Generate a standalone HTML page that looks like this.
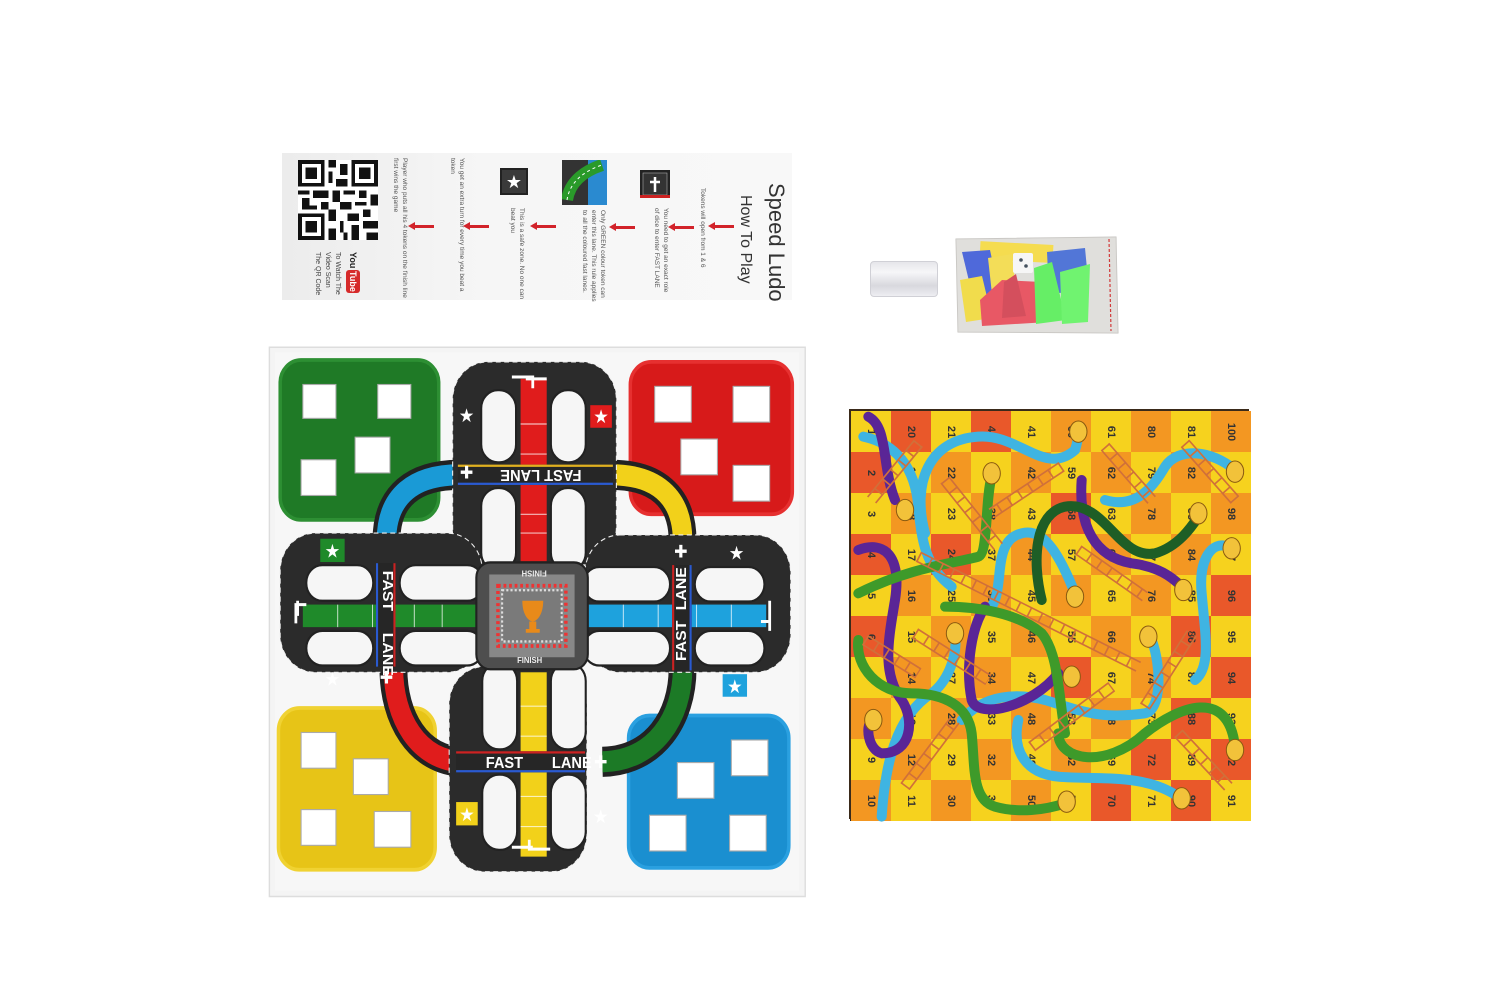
<!DOCTYPE html>
<html><head><meta charset="utf-8">
<style>
*{margin:0;padding:0;box-sizing:border-box}
body{width:1500px;height:1000px;background:#fff;position:relative;overflow:hidden;font-family:"Liberation Sans",sans-serif}
.abs{position:absolute}
.v{position:absolute;writing-mode:vertical-rl;color:#333;white-space:nowrap}
.sm{font-size:6.5px;line-height:9px;color:#555}
.arr{position:absolute;width:20px;height:3px;background:#d2232a}
.arr:before{content:"";position:absolute;left:-6px;top:-3px;border-right:7px solid #d2232a;border-top:4.5px solid transparent;border-bottom:4.5px solid transparent}
#grid{position:absolute;left:849px;top:409px;width:400px;height:410px;display:grid;grid-template-columns:repeat(10,40px);grid-template-rows:repeat(10,41px);border:2px solid #3a2a1a;box-shadow:1px 2px 0 #2a2a2a}
#grid div{display:flex;align-items:center;justify-content:center;font-size:11px;color:#333;font-weight:bold}
#grid div span{display:inline-block;transform:rotate(90deg)}
.y{background:#f6d21e}.o{background:#f39722}.r{background:#e9582a}
</style></head><body>

<!-- instruction card -->
<div class="abs" style="left:282px;top:153px;width:510px;height:147px;background:linear-gradient(90deg,#ececec,#f6f6f6 40%,#f8f8f8)"></div>
<div class="v" style="left:763px;top:183px;font-size:22px">Speed Ludo</div>
<div class="v" style="left:736px;top:195px;font-size:16px">How To Play</div>
<div class="v sm" style="left:698px;top:188px">Tokens will open from 1 &amp; 6</div>
<div class="v sm" style="left:652px;top:208px">You need to get an exact role<br>of dice to enter FAST LANE</div>
<div class="v sm" style="left:580px;top:210px">Only GREEN colour token can<br>enter this lane. This rule applies<br>to all the coloured fast lanes.</div>
<div class="v sm" style="left:508px;top:208px">This is a safe zone. No one can<br>beat you</div>
<div class="v sm" style="left:448px;top:158px">You get an extra turn for every time you beat a<br>token</div>
<div class="v sm" style="left:391px;top:158px">Player who puts all his 4 tokens on the finish line<br>first wins the game</div>
<div class="v" style="left:312px;top:252px;font-size:7px;line-height:10px;color:#444">To Watch The<br>Video Scan<br>The QR Code</div>
<div class="abs" style="left:346px;top:252px;width:18px;height:42px">
  <div class="v" style="left:2px;top:0;font-size:9px;font-weight:bold;color:#222">You</div>
  <div class="v" style="left:0;top:18px;font-size:9px;font-weight:bold;color:#fff;background:#d62a2a;border-radius:3px;padding:1px 2px">Tube</div>
</div>
<div class="arr" style="left:714px;top:225px"></div>
<div class="arr" style="left:674px;top:226px"></div>
<div class="arr" style="left:615px;top:226px"></div>
<div class="arr" style="left:536px;top:225px"></div>
<div class="arr" style="left:469px;top:225px"></div>
<div class="arr" style="left:414px;top:225px"></div>
<svg class="abs" style="left:640px;top:170px" width="30" height="28"><rect width="30" height="28" fill="#222"/><rect x="3" y="3" width="24" height="22" fill="#333" stroke="#aaa" stroke-width=".6"/><path d="M15 7v15M10 12h10" stroke="#fff" stroke-width="2.5"/><rect y="25" width="30" height="3" fill="#c22"/></svg>
<svg class="abs" style="left:562px;top:160px" width="45" height="45"><rect width="45" height="45" fill="#2a8ad0"/><rect width="26" height="45" fill="#333"/><path d="M5 40 C8 20 25 10 40 5" stroke="#2a9a2a" stroke-width="12" fill="none"/><path d="M5 40 C8 20 25 10 40 5" stroke="#fff" stroke-width="1" stroke-dasharray="3 3" fill="none"/></svg>
<svg class="abs" style="left:500px;top:168px" width="28" height="27"><rect width="28" height="27" fill="#222"/><rect x="2" y="2" width="24" height="23" fill="#3a3a3a"/><text x="14" y="20" font-size="18" text-anchor="middle" fill="#fff" font-family="DejaVu Sans">★</text></svg>
<svg class="abs" style="left:297px;top:160px" width="82" height="80" viewBox="0 0 21 21" shape-rendering="crispEdges">
<rect width="21" height="21" fill="#fff"/>
<g fill="#111"><path d="M0 0h7v7H0zM14 0h7v7h-7zM0 14h7v7H0z"/></g>
<g fill="#fff"><path d="M1 1h5v5H1zM15 1h5v5h-5zM1 15h5v5H1z"/></g>
<g fill="#111"><path d="M2 2h3v3H2zM16 2h3v3h-3zM2 16h3v3H2z"/>
<path d="M8 0h2v2H8zM11 1h2v3h-2zM8 3h1v3H8zM10 5h3v2h-3zM0 8h3v1H0zM4 8h4v2H4zM9 8h2v3H9zM12 8h3v1h-3zM16 8h2v2h-2zM19 9h2v3h-2zM1 10h2v3H1zM6 11h2v2H6zM11 11h3v2h-3zM15 11h3v1h-3zM3 12h2v1H3zM8 13h2v3H8zM13 14h3v2h-3zM17 13h2v2h-2zM11 16h1v3h-1zM14 17h2v4h-2zM17 16h4v2h-4zM8 18h2v3H8zM18 19h3v2h-3zM12 19h1v2h-1z"/></g>
</svg>

<!-- dice cup -->
<div class="abs" style="left:870px;top:261px;width:68px;height:36px;border-radius:4px;background:linear-gradient(180deg,#e6e6ea,#f6f6f8 30%,#d8d8de 70%,#eeeef2);border:1px solid #d0d0d6"></div>

<!-- bag -->
<svg class="abs" style="left:950px;top:233px" width="175" height="105" viewBox="950 233 175 105">
<path d="M956 239 L1116 237 L1118 333 L958 332 Z" fill="#d8d6d2" stroke="#c4c2be"/>
<path d="M980 243 h73 v18 h-73z" fill="#f2d21e" transform="rotate(3 1015 252)"/>
<path d="M962 252 l28 -2 l12 56 l-26 4z" fill="#1e3fd0"/>
<path d="M960 280 l22 -4 l10 42 l-26 4z" fill="#eed21a"/>
<path d="M988 258 l24 -4 l4 36 l-24 4z" fill="#f0d42a"/>
<rect x="1013" y="253" width="20" height="20" fill="#f4f4f4" rx="2"/>
<circle cx="1021" cy="260" r="1.8" fill="#123"/><circle cx="1026" cy="266" r="1.8" fill="#123"/>
<path d="M980 300 l22 -20 l40 2 l6 40 l-66 4z" fill="#e22a3a"/>
<path d="M1004 282 l12 -8 l10 42 l-24 2z" fill="#c81e30"/>
<path d="M1047 252 l38 -4 l4 42 l-40 4z" fill="#2250cc"/>
<path d="M1034 268 l18 -6 l14 58 l-30 4z" fill="#3cea3c"/>
<path d="M1060 272 l30 -8 l-2 58 l-26 2z" fill="#48f048"/>
<path d="M956 239 L1116 237 L1118 333 L958 332 Z" fill="#fff" opacity=".22"/>
<line x1="1109" y1="239" x2="1111" y2="331" stroke="#d23a3a" stroke-width="1.2" stroke-dasharray="3 2"/>
</svg>

<!-- ludo board -->
<svg class="abs" style="left:268px;top:345px" width="540" height="553" viewBox="0 0 1550 1470" preserveAspectRatio="none">
<rect x="4" y="6" width="1538" height="1460" fill="#f4f4f4" stroke="#ddd" stroke-width="4"/>
<rect x="20" y="20" width="1505" height="1430" fill="#f7f7f7"/>
<g stroke-width="10">
<rect x="35" y="40" width="455" height="425" rx="60" fill="#1f7a26" stroke="#2d8f33"/>
<rect x="1040" y="45" width="465" height="405" rx="60" fill="#d71a1a" stroke="#e63030"/>
<rect x="30" y="965" width="450" height="430" rx="60" fill="#e7c417" stroke="#f0d232"/>
<rect x="1035" y="985" width="460" height="405" rx="60" fill="#1a8fd0" stroke="#2aa0e0"/>
</g>
<g fill="#fff" stroke="#aaa" stroke-width="3">
<rect x="100" y="105" width="95" height="90"/><rect x="315" y="105" width="95" height="90"/><rect x="250" y="245" width="100" height="95"/><rect x="95" y="305" width="100" height="95"/>
<rect x="1110" y="110" width="105" height="95"/><rect x="1335" y="110" width="105" height="95"/><rect x="1185" y="250" width="105" height="95"/><rect x="1335" y="320" width="105" height="95"/>
<rect x="95" y="1030" width="100" height="95"/><rect x="245" y="1100" width="100" height="95"/><rect x="95" y="1235" width="100" height="95"/><rect x="305" y="1240" width="105" height="95"/>
<rect x="1330" y="1050" width="105" height="95"/><rect x="1175" y="1110" width="105" height="95"/><rect x="1095" y="1250" width="105" height="95"/><rect x="1325" y="1250" width="105" height="95"/>
</g>
<g fill="none" stroke-linecap="butt">
<path d="M340 520 C340 400 420 345 550 345" stroke="#222" stroke-width="80"/>
<path d="M340 520 C340 400 420 345 550 345" stroke="#1a9ad6" stroke-width="56"/>
<path d="M985 345 C1110 345 1190 400 1190 520" stroke="#222" stroke-width="80"/>
<path d="M985 345 C1110 345 1190 400 1190 520" stroke="#f2d11a" stroke-width="56"/>
<path d="M360 860 C360 990 430 1105 560 1108" stroke="#222" stroke-width="80"/>
<path d="M360 860 C360 990 430 1105 560 1108" stroke="#e01c1c" stroke-width="56"/>
<path d="M1190 860 C1190 990 1110 1105 960 1108" stroke="#222" stroke-width="80"/>
<path d="M1190 860 C1190 990 1110 1105 960 1108" stroke="#1c7a26" stroke-width="56"/>
</g>
<g fill="#2b2b2b" stroke="#f0f0f0" stroke-width="3" stroke-dasharray="14 10">
<rect x="530" y="45" width="470" height="540" rx="100"/>
<rect x="520" y="855" width="395" height="545" rx="100"/>
<rect x="35" y="500" width="580" height="370" rx="100"/>
<rect x="910" y="505" width="590" height="365" rx="100"/>
</g>
<g fill="#f6f6f6" stroke="#222" stroke-width="6">
<rect x="612" y="120" width="100" height="192" rx="48"/><rect x="612" y="380" width="100" height="220" rx="48"/>
<rect x="812" y="120" width="100" height="192" rx="48"/><rect x="812" y="380" width="100" height="220" rx="48"/>
<rect x="110" y="585" width="192" height="95" rx="46"/><rect x="378" y="585" width="240" height="95" rx="46"/>
<rect x="110" y="760" width="192" height="92" rx="46"/><rect x="378" y="760" width="240" height="92" rx="46"/>
<rect x="905" y="590" width="249" height="92" rx="46"/><rect x="1225" y="590" width="200" height="92" rx="46"/>
<rect x="905" y="760" width="249" height="92" rx="46"/><rect x="1225" y="760" width="200" height="92" rx="46"/>
<rect x="615" y="845" width="100" height="230" rx="48"/><rect x="615" y="1142" width="100" height="200" rx="48"/>
<rect x="812" y="845" width="100" height="230" rx="48"/><rect x="812" y="1142" width="100" height="200" rx="48"/>
</g>
<rect x="725" y="90" width="75" height="485" fill="#e01c1c"/>
<rect x="100" y="690" width="500" height="60" fill="#1f8a2a"/>
<rect x="915" y="690" width="515" height="60" fill="#1ea2dd"/>
<rect x="725" y="870" width="75" height="490" fill="#f2d11a"/>
<g stroke="#fff" stroke-width="3" opacity=".7">
<path d="M725 210h75M725 290h75M725 450h75M725 500h75M200 690v60M300 690v60M420 690v60M500 690v60M1020 690v60M1120 690v60M1230 690v60M1330 690v60M725 960h75M725 1040h75M725 1200h75M725 1280h75"/>
</g>
<g>
<rect x="545" y="318" width="445" height="54" fill="#262626"/>
<rect x="545" y="318" width="445" height="6" fill="#e0b020"/><rect x="545" y="366" width="445" height="6" fill="#2a5ad0"/>
<rect x="540" y="1080" width="370" height="56" fill="#262626"/>
<rect x="540" y="1080" width="370" height="6" fill="#c22"/><rect x="540" y="1130" width="370" height="6" fill="#2a5ad0"/>
<rect x="310" y="580" width="56" height="275" fill="#262626"/>
<rect x="310" y="580" width="6" height="275" fill="#2a5ad0"/><rect x="360" y="580" width="6" height="275" fill="#c22"/>
<rect x="1160" y="585" width="56" height="280" fill="#262626"/>
<rect x="1160" y="585" width="6" height="280" fill="#c22"/><rect x="1210" y="585" width="6" height="280" fill="#2a5ad0"/>
</g>
<g fill="#fff" font-family="Liberation Sans" font-size="42" font-weight="bold">
<text x="0" y="0" transform="translate(900 332) rotate(180)">FAST  LANE</text>
<text x="625" y="1125">FAST</text><text x="815" y="1125">LANE</text>
<text x="0" y="0" transform="translate(330 600) rotate(90)">FAST</text>
<text x="0" y="0" transform="translate(330 765) rotate(90)">LANE</text>
<text x="0" y="0" transform="translate(1200 840) rotate(-90)">FAST</text>
<text x="0" y="0" transform="translate(1200 705) rotate(-90)">LANE</text>
</g>
<rect x="598" y="578" width="320" height="284" rx="40" fill="#4e4e4e" stroke="#222" stroke-width="6"/>
<rect x="635" y="610" width="245" height="220" fill="#888"/>
<rect x="660" y="640" width="195" height="160" fill="none" stroke="#e33" stroke-width="10" stroke-dasharray="8 8"/>
<rect x="672" y="652" width="171" height="136" fill="#7a7a7a" stroke="#ddd" stroke-width="6" stroke-dasharray="6 6"/>
<path d="M730 680 h60 c0 40 -20 55 -30 55 c-10 0 -30 -15 -30 -55z M750 735 h20 v20 h10 v10 h-40 v-10 h10z" fill="#e88a1a"/>
<g fill="#eee" font-size="22" font-weight="bold" font-family="Liberation Sans"><text x="715" y="845">FINISH</text><text x="0" y="0" transform="translate(800 600) rotate(180)">FINISH</text></g>
<rect x="150" y="515" width="70" height="62" fill="#1f8a2a"/>
<rect x="925" y="160" width="62" height="60" fill="#e01c1c"/>
<rect x="1305" y="875" width="70" height="60" fill="#1ea2dd"/>
<rect x="540" y="1215" width="62" height="62" fill="#f2d11a"/>
<g fill="#fff" font-size="50" font-family="DejaVu Sans" text-anchor="middle">
<text x="185" y="565">★</text><text x="956" y="208">★</text><text x="1340" y="925">★</text><text x="571" y="1265">★</text>
<text x="570" y="205">★</text><text x="1345" y="570">★</text><text x="185" y="905">★</text><text x="955" y="1270">★</text>
<text x="570" y="355" font-size="46">✚</text><text x="1185" y="565" font-size="46">✚</text><text x="340" y="900" font-size="46">✚</text><text x="955" y="1125" font-size="46">✚</text>
</g>
<g fill="none" stroke="#fff" stroke-width="8">
<path d="M700 85h60v30 M740 90h60"/><path d="M810 1340h-60v-25 M760 1335h-60"/>
<path d="M80 740v-50h30 M85 720v-40"/><path d="M1440 680v55h-25 M1440 720v40"/>
</g>
</svg>

<!-- snakes and ladders -->
<div id="grid">
<div class="y"><span>1</span></div><div class="r"><span>20</span></div><div class="y"><span>21</span></div><div class="r"><span>40</span></div><div class="y"><span>41</span></div><div class="o"><span>60</span></div><div class="y"><span>61</span></div><div class="o"><span>80</span></div><div class="y"><span>81</span></div><div class="o"><span>100</span></div>
<div class="r"><span>2</span></div><div class="y"><span>19</span></div><div class="o"><span>22</span></div><div class="y"><span>39</span></div><div class="o"><span>42</span></div><div class="y"><span>59</span></div><div class="o"><span>62</span></div><div class="y"><span>79</span></div><div class="o"><span>82</span></div><div class="y"><span>99</span></div>
<div class="y"><span>3</span></div><div class="o"><span>18</span></div><div class="y"><span>23</span></div><div class="o"><span>38</span></div><div class="y"><span>43</span></div><div class="r"><span>58</span></div><div class="y"><span>63</span></div><div class="o"><span>78</span></div><div class="y"><span>83</span></div><div class="o"><span>98</span></div>
<div class="r"><span>4</span></div><div class="y"><span>17</span></div><div class="r"><span>24</span></div><div class="y"><span>37</span></div><div class="o"><span>44</span></div><div class="y"><span>57</span></div><div class="o"><span>64</span></div><div class="y"><span>77</span></div><div class="o"><span>84</span></div><div class="y"><span>97</span></div>
<div class="y"><span>5</span></div><div class="o"><span>16</span></div><div class="y"><span>25</span></div><div class="o"><span>36</span></div><div class="y"><span>45</span></div><div class="o"><span>56</span></div><div class="y"><span>65</span></div><div class="o"><span>76</span></div><div class="y"><span>85</span></div><div class="r"><span>96</span></div>
<div class="r"><span>6</span></div><div class="y"><span>15</span></div><div class="o"><span>26</span></div><div class="y"><span>35</span></div><div class="o"><span>46</span></div><div class="y"><span>55</span></div><div class="o"><span>66</span></div><div class="y"><span>75</span></div><div class="r"><span>86</span></div><div class="y"><span>95</span></div>
<div class="y"><span>7</span></div><div class="o"><span>14</span></div><div class="y"><span>27</span></div><div class="o"><span>34</span></div><div class="y"><span>47</span></div><div class="r"><span>54</span></div><div class="y"><span>67</span></div><div class="o"><span>74</span></div><div class="y"><span>87</span></div><div class="r"><span>94</span></div>
<div class="o"><span>8</span></div><div class="y"><span>13</span></div><div class="o"><span>28</span></div><div class="y"><span>33</span></div><div class="o"><span>48</span></div><div class="y"><span>53</span></div><div class="o"><span>68</span></div><div class="y"><span>73</span></div><div class="r"><span>88</span></div><div class="y"><span>93</span></div>
<div class="y"><span>9</span></div><div class="o"><span>12</span></div><div class="y"><span>29</span></div><div class="o"><span>32</span></div><div class="y"><span>49</span></div><div class="o"><span>52</span></div><div class="y"><span>69</span></div><div class="r"><span>72</span></div><div class="y"><span>89</span></div><div class="r"><span>92</span></div>
<div class="o"><span>10</span></div><div class="y"><span>11</span></div><div class="o"><span>30</span></div><div class="y"><span>31</span></div><div class="o"><span>50</span></div><div class="y"><span>51</span></div><div class="r"><span>70</span></div><div class="y"><span>71</span></div><div class="r"><span>90</span></div><div class="y"><span>91</span></div>
</div>
<svg class="abs" style="left:845px;top:400px" width="415" height="430" viewBox="0 0 1245 1290">
<g fill="none" stroke-linecap="round">
<g stroke="#3fb4e2" stroke-width="30">
<path d="M240 400 C200 250 250 120 400 110 C520 100 600 230 690 150 C700 120 700 100 700 95"/>
<path d="M55 110 C150 130 210 200 220 320 C230 420 240 500 320 560"/>
<path d="M690 580 C650 480 600 380 530 400 C440 420 480 560 440 620"/>
<path d="M780 300 C880 330 930 250 960 200 C1000 140 1100 150 1170 210"/>
<path d="M1050 840 C1100 800 1080 700 1070 580 C1060 480 1100 420 1150 440"/>
<path d="M110 1250 C120 1100 150 950 260 880 C300 850 340 780 330 700"/>
<path d="M350 960 C420 880 520 880 600 900 C700 930 760 960 900 940 C950 930 950 800 920 720"/>
<path d="M520 960 C500 1050 540 1120 640 1130 C760 1140 900 1120 1000 1190"/>
</g>
<g stroke="#5a2596" stroke-width="30">
<path d="M70 50 C130 80 110 200 150 300"/>
<path d="M710 240 C700 380 750 470 860 490 C940 500 980 530 1010 560"/>
<path d="M40 450 C120 420 170 470 150 600 C130 720 110 820 170 900 C210 960 200 1060 110 1060 C70 1050 60 980 80 960"/>
<path d="M420 620 C380 680 360 800 380 900 C400 960 560 920 640 820"/>
</g>
<g stroke="#3e9a2a" stroke-width="30">
<path d="M40 580 C200 500 330 490 400 470 C430 460 420 300 440 230"/>
<path d="M40 720 C30 800 100 880 200 880 C300 880 370 920 380 1000 C390 1100 380 1200 450 1220 C520 1240 600 1230 660 1210"/>
<path d="M640 1000 C640 1080 780 1110 900 1000 C1000 920 1150 860 1170 1040"/>
<path d="M300 620 C400 620 520 640 590 700 C640 760 640 880 660 1000"/>
</g>
<path d="M590 600 C560 480 570 340 660 320 C780 300 820 480 930 460 C1000 440 1040 380 1060 350" stroke="#1e5e26" stroke-width="30"/>
</g>
<g fill="#f2c23a" stroke="#8a5a10" stroke-width="3">
<ellipse cx="700" cy="95" rx="26" ry="32"/><ellipse cx="180" cy="330" rx="26" ry="32"/><ellipse cx="440" cy="220" rx="26" ry="32"/>
<ellipse cx="690" cy="590" rx="26" ry="32"/><ellipse cx="1060" cy="340" rx="26" ry="32"/><ellipse cx="1015" cy="570" rx="26" ry="32"/>
<ellipse cx="1170" cy="215" rx="26" ry="32"/><ellipse cx="1160" cy="445" rx="26" ry="32"/><ellipse cx="85" cy="960" rx="26" ry="32"/>
<ellipse cx="330" cy="700" rx="26" ry="32"/><ellipse cx="680" cy="830" rx="26" ry="32"/><ellipse cx="910" cy="710" rx="26" ry="32"/>
<ellipse cx="1170" cy="1050" rx="26" ry="32"/><ellipse cx="665" cy="1205" rx="26" ry="32"/><ellipse cx="1010" cy="1195" rx="26" ry="32"/>
</g>
<g stroke="#d0703a" stroke-width="5">
<path d="M232 139 L92 309 M208 121 L68 291 M658 212 L448 352 M642 188 L432 328 M312 231 L472 431 M288 249 L448 449 M791 130 L931 290 M769 150 L909 310 M1031 120 L1181 290 M1009 140 L1159 310 M227 457 L887 787 M213 483 L873 813 M708 438 L908 578 M692 462 L892 602 M68 707 L228 807 M52 733 L212 833 M218 687 L438 827 M202 713 L422 853 M192 1169 L342 969 M168 1151 L318 951 M569 1052 L809 872 M551 1028 L791 848 M913 928 L1053 708 M887 912 L1027 692 M1011 990 L1161 1150 M989 1010 L1139 1170"/>
</g>
<g stroke="#d0703a" stroke-width="30" stroke-dasharray="5 32" fill="none">
<path d="M220 130 L80 300 M650 200 L440 340 M300 240 L460 440 M780 140 L920 300 M1020 130 L1170 300 M220 470 L880 800 M700 450 L900 590 M60 720 L220 820 M210 700 L430 840 M180 1160 L330 960 M560 1040 L800 860 M900 920 L1040 700 M1000 1000 L1150 1160"/>
</g>
</svg>
</body></html>
